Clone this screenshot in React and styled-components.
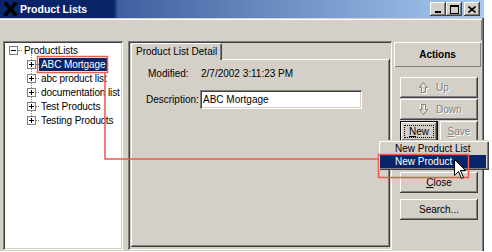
import React from 'react'
import styled, { createGlobalStyle, css } from 'styled-components'

const GlobalStyle = createGlobalStyle`
  html, body { margin: 0; padding: 0; background: #fff; }
  body {
    font-family: "Liberation Sans", Arial, sans-serif;
    font-size: 10px;
    color: #000;
  }
`

const raised = css`
  box-shadow: inset -1px -1px #404040, inset 1px 1px #fff, inset -2px -2px #808080, inset 2px 2px #d4d0c8;
`
const sunken = css`
  box-shadow: inset 1px 1px #808080, inset -1px -1px #fff, inset 2px 2px #404040, inset -2px -2px #d4d0c8;
`

const Page = styled.div`
  position: relative;
  width: 492px;
  height: 252px;
`

const Window = styled.div`
  width: 484px;
  height: 251px;
  background: #d4d0c8;
  display: flex;
  flex-direction: column;
  box-shadow: inset -1px 0 #404040, inset -2px 0 #808080;
`

const TitleBar = styled.div`
  height: 18px;
  display: flex;
  align-items: center;
  padding: 0 4px 0 3px;
  background: linear-gradient(to right, #0a246a 0, #0a246a 114px, #3d5f9e 118px, #a6caf0 100%);
  color: #fff;
  font-weight: bold;
  font-size: 10.5px;
`

const TitleText = styled.span`
  margin-left: 2px;
  flex: 1;
`

const CaptionButton = styled.div`
  width: 16px;
  height: 14px;
  margin-left: ${p => p.$gap || 0}px;
  background: #d4d0c8;
  ${raised};
  display: flex;
  align-items: center;
  justify-content: center;
`

const MenuStrip = styled.div`
  height: 21px;
  margin: 1px 2px 0 0;
  box-shadow: inset 0 1px #fff, inset -1px 0 #808080;
`

const Body = styled.div`
  flex: 1;
  display: flex;
  padding: 1px 2px 1px 3px;
`

const TreePane = styled.div`
  width: 120px;
  background: #fff;
  padding: 2px;
  box-sizing: border-box;
  overflow: hidden;
  ${sunken};
`

const TreeRow = styled.div`
  height: 14px;
  display: flex;
  align-items: center;
  padding-left: ${p => p.$indent}px;
`

const ExpandBox = styled.div`
  position: relative;
  z-index: 1;
  flex: none;
  width: 9px;
  height: 9px;
  box-sizing: border-box;
  border: 1px solid #808080;
  background: #fff;
  &::before {
    content: "";
    position: absolute;
    left: 1px;
    top: 3px;
    width: 5px;
    height: 1px;
    background: #000;
  }
  ${p => p.$plus && css`
    &::after {
      content: "";
      position: absolute;
      left: 3px;
      top: 1px;
      width: 1px;
      height: 5px;
      background: #000;
    }
  `}
`

const Connector = styled.div`
  flex: none;
  width: ${p => p.$w}px;
  border-top: 1px dotted #808080;
`

const NodeLabel = styled.span`
  height: 13px;
  line-height: 13px;
  padding: 0 2px;
  white-space: nowrap;
  letter-spacing: -0.1px;
  ${p => p.$selected && css`
    background: #0a246a;
    color: #fff;
  `}
`

const ChildList = styled.div`
  position: relative;
  &::before {
    content: "";
    position: absolute;
    left: 26px;
    top: -2px;
    bottom: 7px;
    border-left: 1px dotted #808080;
  }
`

const DetailPane = styled.div`
  width: 264px;
  margin-left: 5px;
  padding: 2px 2px 3px 3px;
  box-sizing: border-box;
  display: flex;
  flex-direction: column;
  ${sunken};
`

const TabStrip = styled.div`
  display: flex;
  height: 16px;
  position: relative;
  z-index: 1;
`

const Tab = styled.div`
  height: 17px;
  box-sizing: border-box;
  padding: 3px 5px 0 5px;
  background: #d4d0c8;
  border-radius: 2px 2px 0 0;
  box-shadow: inset 1px 1px #fff, inset -1px 0 #404040, inset -2px 0 #808080;
  white-space: nowrap;
`

const TabPage = styled.div`
  flex: 1;
  ${raised};
  padding: 2px;
`

const Form = styled.div`
  display: grid;
  grid-template-columns: 54px 162px;
  grid-template-rows: 14px 19px;
  row-gap: 10px;
  align-items: center;
  padding: 5px 0 0 13px;
`

const FieldLabel = styled.span`
  padding-left: ${p => p.$indent || 0}px;
  white-space: nowrap;
`

const FieldValue = styled.span`
  padding-left: 1px;
  white-space: nowrap;
`

const TextBox = styled.div`
  height: 19px;
  background: #fff;
  ${sunken};
  padding: 0 3px;
  display: flex;
  align-items: center;
`

const ActionsPane = styled.div`
  width: 90px;
  display: flex;
  flex-direction: column;
`

const ActionsHeader = styled.div`
  margin: 1px 0 0 2px;
  width: 87px;
  height: 25px;
  box-shadow: inset 1px 1px #fff, inset -1px -1px #808080;
  display: flex;
  align-items: center;
  justify-content: center;
  font-weight: bold;
`

const ButtonColumn = styled.div`
  display: flex;
  flex-direction: column;
  padding: 10px 0 0 8px;
  width: 78px;
`

const ButtonRow = styled.div`
  display: flex;
  gap: 2px;
`

const Button = styled.button`
  font: inherit;
  width: ${p => p.$w || 78}px;
  height: 21px;
  margin-top: ${p => p.$mt || 0}px;
  padding: ${p => (p.$left ? '0 0 0 19px' : '0')};
  border: none;
  background: #d4d0c8;
  color: #000;
  position: relative;
  display: flex;
  align-items: center;
  justify-content: ${p => (p.$left ? 'flex-start' : 'center')};
  gap: 7px;
  ${raised};
  &:disabled {
    color: #808080;
    text-shadow: 1px 1px #fff;
  }
  ${p => p.$default && css`
    box-shadow: inset 0 0 0 1px #000, inset -2px -2px #404040, inset 2px 2px #fff, inset -3px -3px #808080;
    &::after {
      content: "";
      position: absolute;
      inset: 4px;
      border: 1px dotted #000;
    }
  `}
`

const Key = styled.span`
  text-decoration: underline;
`

const PopupMenu = styled.div`
  position: absolute;
  left: 378px;
  top: 140px;
  width: 111px;
  box-sizing: border-box;
  padding: 2px 3px 2px 2px;
  background: #d4d0c8;
  box-shadow: inset 1px 1px #d4d0c8, inset 2px 2px #fff, inset -1px -1px #404040, inset -2px -2px #808080;
  z-index: 2;
`

const MenuItem = styled.div`
  height: 13px;
  line-height: 13px;
  padding-left: 15px;
  white-space: nowrap;
  ${p => p.$active && css`
    background: #0a246a;
    color: #fff;
  `}
`

const Overlay = styled.svg`
  position: absolute;
  left: 0;
  top: 0;
  z-index: 3;
  pointer-events: none;
`

const ArrowIcon = ({ down }) => (
  <svg width="10" height="12" viewBox="0 0 10 12">
    <g transform={down ? 'rotate(180 4.5 5.5)' : undefined} fill="none" strokeWidth="1">
      <polygon points="5.5,1.5 9.5,6.5 7.5,6.5 7.5,11.5 3.5,11.5 3.5,6.5 1.5,6.5" stroke="#fff" />
      <polygon points="4.5,0.5 8.5,5.5 6.5,5.5 6.5,10.5 2.5,10.5 2.5,5.5 0.5,5.5" stroke="#808080" />
    </g>
  </svg>
)

const AppIcon = () => (
  <svg width="15" height="14" viewBox="0 0 15 14">
    <path d="M3 2 L12 12 M12 2 L3 12" stroke="#000" strokeWidth="3.4" strokeLinecap="square" />
    <path d="M1 1.5 H5 M10 1.5 H14 M1 12.5 H5 M10 12.5 H14" stroke="#000" strokeWidth="1.6" />
  </svg>
)

const children = ['ABC Mortgage', 'abc product list', 'documentation list', 'Test Products', 'Testing Products']

const App = () => (
  <Page>
    <GlobalStyle />
    <Window>
      <TitleBar>
        <AppIcon />
        <TitleText>Product Lists</TitleText>
        <CaptionButton>
          <svg width="8" height="8"><rect x="1" y="6" width="6" height="2" fill="#000" /></svg>
        </CaptionButton>
        <CaptionButton>
          <svg width="9" height="9"><rect x="0.5" y="0.5" width="8" height="8" fill="none" stroke="#000" /><rect x="0" y="0" width="9" height="2" fill="#000" /></svg>
        </CaptionButton>
        <CaptionButton $gap={2}>
          <svg width="8" height="7"><path d="M0.5 0.5 L7.5 6.5 M7.5 0.5 L0.5 6.5" stroke="#000" strokeWidth="1.6" /></svg>
        </CaptionButton>
      </TitleBar>
      <MenuStrip />
      <Body>
        <TreePane>
          <TreeRow $indent={4}>
            <ExpandBox />
            <Connector $w={4} />
            <NodeLabel>ProductLists</NodeLabel>
          </TreeRow>
          <ChildList>
            {children.map((name, i) => (
              <TreeRow key={name} $indent={22}>
                <ExpandBox $plus />
                <Connector $w={3} />
                <NodeLabel $selected={i === 0}>{name}</NodeLabel>
              </TreeRow>
            ))}
          </ChildList>
        </TreePane>
        <DetailPane>
          <TabStrip>
            <Tab>Product List Detail</Tab>
          </TabStrip>
          <TabPage>
            <Form>
              <FieldLabel $indent={2}>Modified:</FieldLabel>
              <FieldValue>2/7/2002 3:11:23 PM</FieldValue>
              <FieldLabel>Description:</FieldLabel>
              <TextBox>ABC Mortgage</TextBox>
            </Form>
          </TabPage>
        </DetailPane>
        <ActionsPane>
          <ActionsHeader>Actions</ActionsHeader>
          <ButtonColumn>
            <Button disabled $left><ArrowIcon />Up</Button>
            <Button disabled $left $mt={1}><ArrowIcon down />Down</Button>
            <ButtonRow>
              <Button $w={38} $mt={1} $default><span><Key>N</Key>ew</span></Button>
              <Button $w={38} $mt={1} disabled><span><Key>S</Key>ave</span></Button>
            </ButtonRow>
            <Button $mt={5} aria-label="Delete" />
            <Button $mt={4}><span><Key>C</Key>lose</span></Button>
            <Button $mt={6}>Search...</Button>
          </ButtonColumn>
        </ActionsPane>
      </Body>
    </Window>
    <PopupMenu>
      <MenuItem>New Product List</MenuItem>
      <MenuItem $active>New Product</MenuItem>
    </PopupMenu>
    <Overlay width="492" height="252" viewBox="0 0 492 252">
      <g fill="none" stroke="#f05a4a" strokeWidth="1.5">
        <rect x="37.5" y="56.5" width="70" height="16" />
        <path d="M105 73 V159 H378" />
        <rect x="378.5" y="154.5" width="90" height="23" />
      </g>
      <path
        d="M454.5 159.5 V175.5 L458.5 171.5 L461.5 178.5 L463.5 177.5 L460.5 170.5 L465.5 170.5 Z"
        fill="#fff"
        stroke="#000"
        strokeWidth="1"
      />
    </Overlay>
  </Page>
)

export default App
